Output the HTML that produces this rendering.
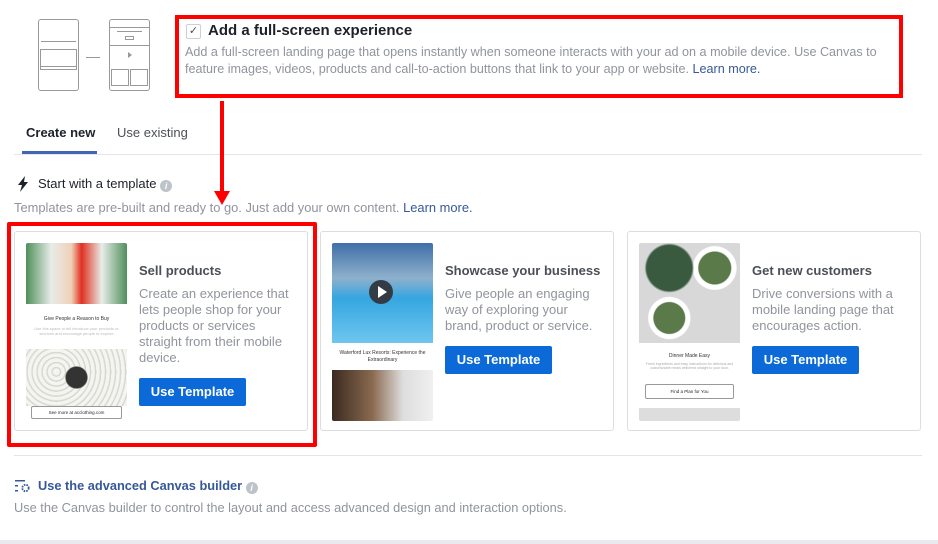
<!DOCTYPE html>
<html><head><meta charset="utf-8"><style>
*{margin:0;padding:0;box-sizing:border-box}
body{width:938px;height:544px;background:#fff;font-family:"Liberation Sans",sans-serif;position:relative;overflow:hidden;color:#1d2129}
.a{position:absolute}
.gray{color:#90949c}
.red{border:4px solid #f00;position:absolute}
.card{position:absolute;top:231px;width:294px;height:200px;border:1px solid #dadde1;border-radius:3px;background:#fff}
.img{position:absolute;left:11px;top:11px;width:101px;height:178px;overflow:hidden;border-radius:2px;background:#fff}
.ttl{position:absolute;left:124px;top:31px;font-weight:bold;font-size:13px;color:#4b4f56}
.desc{position:absolute;left:124px;top:54px;font-size:13px;line-height:16px;color:#90949c;width:160px}
.btn{position:absolute;left:124px;width:107px;height:28px;background:#0b69d8;color:#fff;font-weight:bold;font-size:13px;text-align:center;line-height:28px;border-radius:2px}
.ph{position:absolute;border:1.3px solid #999;border-radius:3px}
.info{display:inline-block;width:12px;height:12px;border-radius:50%;background:#bec2c9;color:#fff;font-size:9px;text-align:center;line-height:12px;font-weight:bold;font-style:italic;vertical-align:-1px}
</style></head><body>
<div class="ph" style="left:38px;top:19px;width:41px;height:72px"></div>
<div class="a" style="left:41px;top:41px;width:35px;height:3px;border-top:1px solid #999"></div>
<div class="a" style="left:40px;top:49px;width:37px;height:18px;border:1px solid #999"></div>
<div class="a" style="left:40px;top:66px;width:37px;height:4px;border:1px solid #999"></div>
<div class="a" style="left:86px;top:57px;width:14px;border-top:1px solid #999"></div>
<div class="ph" style="left:109px;top:19px;width:41px;height:72px"></div>
<div class="a" style="left:110px;top:27px;width:39px;border-top:1px solid #999"></div>
<div class="a" style="left:117px;top:31px;width:25px;border-top:1px solid #999"></div>
<div class="a" style="left:125px;top:36px;width:9px;height:4px;border:1px solid #999"></div>
<div class="a" style="left:110px;top:45px;width:39px;border-top:1px solid #999"></div>
<div class="a" style="left:128px;top:52px;width:0;height:0;border-left:4px solid #999;border-top:3px solid transparent;border-bottom:3px solid transparent"></div>
<div class="a" style="left:111px;top:69px;width:18px;height:17px;border:1px solid #999"></div>
<div class="a" style="left:130px;top:69px;width:18px;height:17px;border:1px solid #999"></div>
<div class="red" style="left:175px;top:15px;width:728px;height:83px"></div>
<div class="a" style="left:186px;top:24px;width:15px;height:15px;border:1px solid #ccd0d5;border-radius:2px;font-size:11px;text-align:center;line-height:13px;color:#4b4f56">✓</div>
<div class="a" style="left:208px;top:22px;font-size:15px;font-weight:bold;color:#1d2129">Add a full-screen experience</div>
<div class="a gray" style="left:185px;top:44px;font-size:12.6px;line-height:16.5px;width:712px">Add a full-screen landing page that opens instantly when someone interacts with your ad on a mobile device. Use Canvas to feature images, videos, products and call-to-action buttons that link to your app or website. <span style="color:#365899">Learn more.</span></div>
<div class="a" style="left:26px;top:125px;font-size:13px;font-weight:bold;color:#1d2129">Create new</div>
<div class="a" style="left:117px;top:125px;font-size:13px;color:#4b4f56">Use existing</div>
<div class="a" style="left:14px;top:154px;width:908px;border-top:1px solid #e5e5e5"></div>
<div class="a" style="left:22px;top:151px;width:75px;height:3px;background:#4267b2"></div>
<svg class="a" style="left:16px;top:176px" width="14" height="16" viewBox="0 0 14 16"><path d="M9 0 L2 9 H6 L4 16 L12 6 H8 Z" fill="#1d2129"/></svg>
<div class="a" style="left:38px;top:176px;font-size:13px;color:#1d2129">Start with a template <span class="info">i</span></div>
<div class="a gray" style="left:14px;top:200px;font-size:12.9px">Templates are pre-built and ready to go. Just add your own content. <span style="color:#365899">Learn more.</span></div>
<div class="card" style="left:14px">
 <div class="img">
  <div style="height:61px;background:linear-gradient(90deg,#4f8f5a 0%,#e8ece8 25%,#f0d0b8 45%,#e03020 55%,#e8ece8 75%,#4f8f5a 100%)"></div>
  <div style="font-size:5px;text-align:center;margin-top:12px;color:#333">Give People a Reason to Buy</div>
  <div style="font-size:4px;text-align:center;color:#bbb;padding:4px 8px">Use this space to tell introduce your products or services and encourage people to explore</div>
  <div style="position:absolute;top:106px;width:101px;height:57px;background:radial-gradient(circle at 50% 50%,#333 0 18%,transparent 20%),repeating-radial-gradient(circle at 30% 40%,#f4f4f0 0 3px,#d8d8d0 4px 5px)"></div>
  <div style="position:absolute;top:163px;left:5px;width:91px;height:13px;border:1px solid #999;border-radius:2px;font-size:4.5px;text-align:center;line-height:11px;background:#fff">See more at acclothing.com</div>
 </div>
 <div class="ttl" style="top:31px">Sell products</div>
 <div class="desc">Create an experience that lets people shop for your products or services straight from their mobile device.</div>
 <div class="btn" style="top:146px">Use Template</div>
</div>
<div class="card" style="left:320px">
 <div class="img">
  <div style="height:100px;background:linear-gradient(180deg,#3e6fa8 0%,#8fb0cc 35%,#35a6e0 55%,#6fc6ef 100%)"></div>
  <div style="position:absolute;left:37px;top:37px;width:24px;height:24px;border-radius:50%;background:#333b44"></div>
  <div style="position:absolute;left:46px;top:43px;border-left:9px solid #fff;border-top:6px solid transparent;border-bottom:6px solid transparent"></div>
  <div style="font-size:5px;text-align:center;padding:7px 6px;color:#333;line-height:7px">Waterford Lux Resorts: Experience the Extraordinary</div>
  <div style="position:absolute;top:127px;width:101px;height:51px;background:linear-gradient(90deg,#3a2a20,#8a6a50 40%,#ddd 70%,#f0f0f0)"></div>
 </div>
 <div class="ttl">Showcase your business</div>
 <div class="desc">Give people an engaging way of exploring your brand, product or service.</div>
 <div class="btn" style="top:114px">Use Template</div>
</div>
<div class="card" style="left:627px">
 <div class="img">
  <div style="height:100px;background:radial-gradient(circle at 30% 25%,#3a5a40 0 22%,transparent 24%),radial-gradient(circle at 75% 25%,#5a7a4a 0 15%,#fff 16% 20%,transparent 21%),radial-gradient(circle at 30% 75%,#5a7a4a 0 15%,#fff 16% 20%,transparent 21%),#d8d8d8"></div>
  <div style="font-size:5px;text-align:center;margin-top:10px;color:#333">Dinner Made Easy</div>
  <div style="font-size:3.5px;text-align:center;color:#aaa;padding:3px 6px">Fresh ingredients and easy instructions for delicious and customizable meals delivered straight to your door.</div>
  <div style="position:absolute;top:141px;left:6px;width:89px;height:15px;border:1px solid #999;border-radius:2px;font-size:4.5px;text-align:center;line-height:13px">Find a Plan for You</div>
  <div style="position:absolute;top:165px;width:101px;height:13px;background:#ddd"></div>
 </div>
 <div class="ttl">Get new customers</div>
 <div class="desc">Drive conversions with a mobile landing page that encourages action.</div>
 <div class="btn" style="top:114px">Use Template</div>
</div>
<div class="red" style="left:7px;top:222px;width:310px;height:225px;border-radius:2px"></div>
<div class="a" style="left:220px;top:101px;width:4px;height:92px;background:#f00"></div>
<div class="a" style="left:214px;top:191px;border-top:14px solid #f00;border-left:8px solid transparent;border-right:8px solid transparent"></div>
<div class="a" style="left:14px;top:455px;width:908px;border-top:1px solid #e5e5e5"></div>
<svg class="a" style="left:14px;top:479px" width="18" height="14" viewBox="0 0 18 14"><g fill="#365899"><rect x="1" y="1" width="10" height="1.5"/><rect x="1" y="6" width="3" height="1.5"/><rect x="1" y="11" width="3" height="1.5"/><circle cx="11.5" cy="9" r="3.2" fill="none" stroke="#365899" stroke-width="1.8" stroke-dasharray="1.6 1"/></g></svg>
<div class="a" style="left:38px;top:478px;font-size:12.8px;font-weight:bold;color:#365899">Use the advanced Canvas builder <span class="info" style="font-style:italic">i</span></div>
<div class="a gray" style="left:14px;top:500px;font-size:12.8px">Use the Canvas builder to control the layout and access advanced design and interaction options.</div>
<div class="a" style="left:0;top:540px;width:938px;height:4px;background:#e9eaed"></div>
</body></html>
